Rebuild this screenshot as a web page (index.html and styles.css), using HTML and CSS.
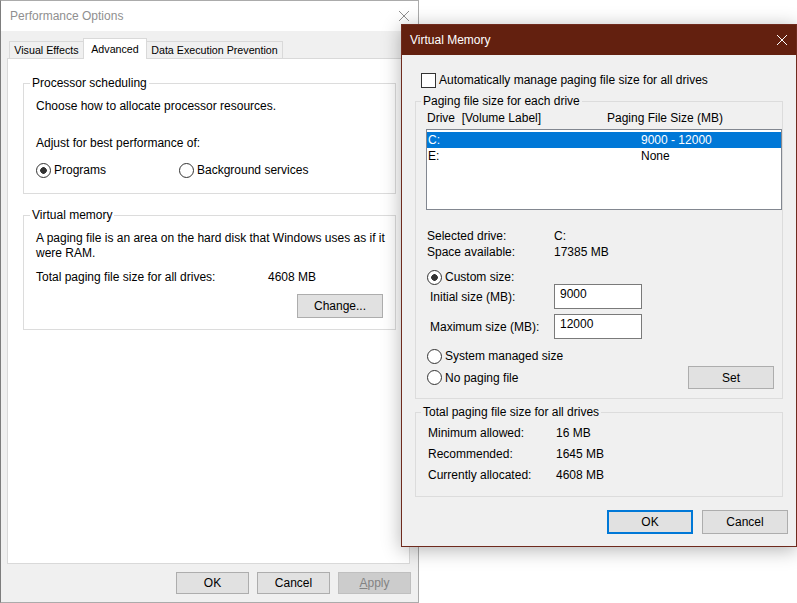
FILE: index.html
```html
<!DOCTYPE html>
<html lang="en">
<head>
  <meta charset="UTF-8">
  <meta name="viewport" content="width=device-width, initial-scale=1.0">
  <title>Performance Options - Virtual Memory</title>
  <link rel="stylesheet" href="styles.css">
</head>
<body>

  <!-- Ventana de fondo: Performance Options -->
  <section class="window perf">
    <header class="perf-title">
      <span>Performance Options</span>
      <svg class="close" width="10" height="10" viewBox="0 0 10 10"><path d="M0 0L10 10M10 0L0 10"/></svg>
    </header>

    <nav class="tabs">
      <span class="tab">Visual Effects</span>
      <span class="tab active">Advanced</span>
      <span class="tab">Data Execution Prevention</span>
    </nav>

    <div class="panel">
      <fieldset class="group sched">
        <legend>Processor scheduling</legend>
        <p>Choose how to allocate processor resources.</p>
        <p class="adjust">Adjust for best performance of:</p>
        <div class="radio-row">
          <label class="radio checked">Programs</label>
          <label class="radio">Background services</label>
        </div>
      </fieldset>

      <fieldset class="group vmem">
        <legend>Virtual memory</legend>
        <p class="about">A paging file is an area on the hard disk that Windows uses as if it<br>were RAM.</p>
        <div class="total">
          <span>Total paging file size for all drives:</span>
          <span>4608 MB</span>
        </div>
        <button class="btn change">Change...</button>
      </fieldset>
    </div>

    <div class="actions">
      <button class="btn">OK</button>
      <button class="btn">Cancel</button>
      <button class="btn" disabled><u>A</u>pply</button>
    </div>
  </section>

  <!-- Dialogo activo: Virtual Memory -->
  <section class="window vm">
    <header class="vm-title">
      <span>Virtual Memory</span>
      <svg class="close" width="10" height="10" viewBox="0 0 10 10"><path d="M0 0L10 10M10 0L0 10"/></svg>
    </header>

    <div class="vm-body">
      <label class="check">Automatically manage paging file size for all drives</label>

      <fieldset class="group drives">
        <legend>Paging file size for each drive</legend>
        <div class="list-head">
          <span>Drive  [Volume Label]</span>
          <span>Paging File Size (MB)</span>
        </div>
        <div class="listbox">
          <div class="list-row selected"><span>C:</span><span>9000 - 12000</span></div>
          <div class="list-row"><span>E:</span><span>None</span></div>
        </div>

        <div class="info">
          <span>Selected drive:</span><span>C:</span>
          <span>Space available:</span><span>17385 MB</span>
        </div>

        <label class="radio checked custom">Custom size:</label>
        <div class="sizes">
          <span>Initial size (MB):</span>
          <input class="field" type="text" value="9000">
          <span>Maximum size (MB):</span>
          <input class="field" type="text" value="12000">
        </div>

        <label class="radio managed">System managed size</label>
        <div class="set-row">
          <label class="radio">No paging file</label>
          <button class="btn set">Set</button>
        </div>
      </fieldset>

      <fieldset class="group totals">
        <legend>Total paging file size for all drives</legend>
        <div class="info sums">
          <span>Minimum allowed:</span><span>16 MB</span>
          <span>Recommended:</span><span>1645 MB</span>
          <span>Currently allocated:</span><span>4608 MB</span>
        </div>
      </fieldset>

      <div class="actions vm-actions">
        <button class="btn default">OK</button>
        <button class="btn">Cancel</button>
      </div>
    </div>
  </section>

</body>
</html>
```

FILE: styles.css
```css
/* Estilos generales */
* {
  margin: 0;
  padding: 0;
  box-sizing: border-box;
}

body {
  font-family: "Liberation Sans", Arial, sans-serif;
  font-size: 12px;
  line-height: 16px;
  color: #000;
  background-color: #fff;
  width: 797px;
  height: 603px;
  position: relative;
  overflow: hidden;
}

/* Ventanas sobre el escritorio */
.window {
  position: absolute;
  display: flex;
  flex-direction: column;
  background-color: #f0f0f0;
}

.close path {
  fill: none;
  stroke-width: 1;
}

/* Performance Options */
.perf {
  left: 0;
  top: 0;
  width: 419px;
  height: 603px;
  border: 1px solid #ababab;
  border-left-color: #7d7d7d;
}

.perf-title {
  flex: none;
  height: 30px;
  background-color: #fff;
  color: #8f8f8f;
  display: flex;
  align-items: center;
  justify-content: space-between;
  padding: 0 9px;
}

.perf-title .close path {
  stroke: #8f8f8f;
}

.tabs {
  display: flex;
  align-items: flex-end;
  height: 20px;
  margin: 7px 0 0 8px;
  position: relative;
  z-index: 1;
}

.tab {
  height: 17px;
  border: 1px solid #d9d9d9;
  border-bottom: none;
  background-color: #f0f0f0;
  font-size: 10.7px;
  display: flex;
  align-items: center;
  justify-content: center;
}

.tab:nth-child(1) {
  width: 75px;
}

.tab.active {
  width: 64px;
  height: 21px;
  margin: 0 0 -1px -1px;
  background-color: #fff;
}

.tab:nth-child(3) {
  width: 137px;
  margin-left: -1px;
}

.panel {
  margin-left: 6px;
  width: 403px;
  height: 506px;
  background-color: #fff;
  border: 1px solid #d9d9d9;
  padding: 16px 13px 0 15px;
}

/* Grupos (fieldset) */
.group {
  border: 1px solid #dcdcdc;
  min-width: 0;
}

.group legend {
  padding: 0 2px;
}

.panel .group {
  padding: 7px 12px 15px 12px;
}

.panel .group legend {
  margin-left: -6px;
}

.panel .vmem {
  margin-top: 13px;
  padding: 8px 12px 11px 12px;
}

.adjust {
  margin-top: 21px;
}

.radio-row {
  display: grid;
  grid-template-columns: 143px auto;
  margin-top: 11px;
}

.about {
  line-height: 15px;
  white-space: nowrap;
}

.total {
  display: grid;
  grid-template-columns: 232px auto;
  margin-top: 8px;
}

/* Radios y casillas */
.radio,
.check {
  display: flex;
  align-items: center;
  gap: 3px;
  height: 16px;
}

.radio::before,
.check::before {
  content: "";
  flex: none;
  width: 13px;
  height: 13px;
  border: 1px solid #333;
  background-color: #fff;
}

.radio::before {
  border-radius: 50%;
}

.radio.checked::before {
  background: radial-gradient(circle, #333 0 3px, #fff 3.6px);
}

/* Botones */
.btn {
  font: inherit;
  color: #000;
  background-color: #e1e1e1;
  border: 1px solid #adadad;
  width: 73px;
  height: 22px;
}

.btn:disabled {
  background-color: #ccc;
  border-color: #bfbfbf;
  color: #838383;
}

.change {
  display: block;
  width: 86px;
  height: 24px;
  margin: 9px 0 0 auto;
}

.actions {
  display: flex;
  justify-content: flex-end;
  gap: 8px;
}

.perf .actions {
  margin-top: 8px;
  padding-right: 7px;
}

/* Virtual Memory */
.vm {
  left: 401px;
  top: 24px;
  width: 396px;
  height: 523px;
  border: 1px solid #6f2b1e;
  box-shadow: 0 3px 18px rgba(0, 0, 0, 0.3);
}

.vm-title {
  flex: none;
  height: 30px;
  background-color: #63200f;
  color: #fff;
  display: flex;
  align-items: center;
  justify-content: space-between;
  padding: 0 9px 0 8px;
}

.vm-title .close path {
  stroke: #fff;
}

.vm-body {
  padding: 17px 13px 0;
}

.check {
  margin-left: 6px;
}

.vm .drives {
  margin-top: 5px;
  padding: 1px 0 9px 10px;
}

.vm .drives legend {
  margin-left: -5px;
}

.list-head {
  display: grid;
  grid-template-columns: 180px auto;
  padding-left: 1px;
  white-space: pre;
}

.listbox {
  margin-top: 3px;
  width: 356px;
  height: 81px;
  background-color: #fff;
  border: 1px solid #828790;
  padding-top: 2px;
}

.list-row {
  display: grid;
  grid-template-columns: 213px auto;
  padding-left: 1px;
}

.list-row.selected {
  background-color: #0078d7;
  color: #fff;
}

.info {
  display: grid;
  grid-template-columns: 127px auto;
  margin-top: 18px;
  padding-left: 1px;
}

.custom {
  margin-top: 9px;
  padding-left: 1px;
}

.sizes {
  display: grid;
  grid-template-columns: 124px 88px;
  row-gap: 5px;
  align-items: center;
  margin-top: -1px;
  padding-left: 4px;
}

.field {
  font: inherit;
  line-height: 16px;
  height: 25px;
  border: 1px solid #7a7a7a;
  background-color: #fff;
  padding: 1px 5px 6px;
  color: #000;
  outline: none;
}

.managed {
  margin-top: 9px;
  padding-left: 1px;
}

.set-row {
  display: flex;
  align-items: center;
  justify-content: space-between;
  height: 23px;
  margin-top: 2px;
  padding: 0 8px 0 1px;
}

.set {
  width: 86px;
  height: 23px;
}

.vm .totals {
  margin-top: 5px;
  padding: 3px 0 10px 12px;
}

.vm .totals legend {
  margin-left: -7px;
}

.sums {
  grid-template-columns: 128px auto;
  line-height: 21px;
  margin-top: 0;
  padding-left: 0;
}

.vm-actions {
  gap: 9px;
  margin: 13px -5px 0 0;
}

.vm-actions .btn {
  width: 86px;
  height: 24px;
}

.vm-actions .default {
  border: 2px solid #0078d7;
}
```
